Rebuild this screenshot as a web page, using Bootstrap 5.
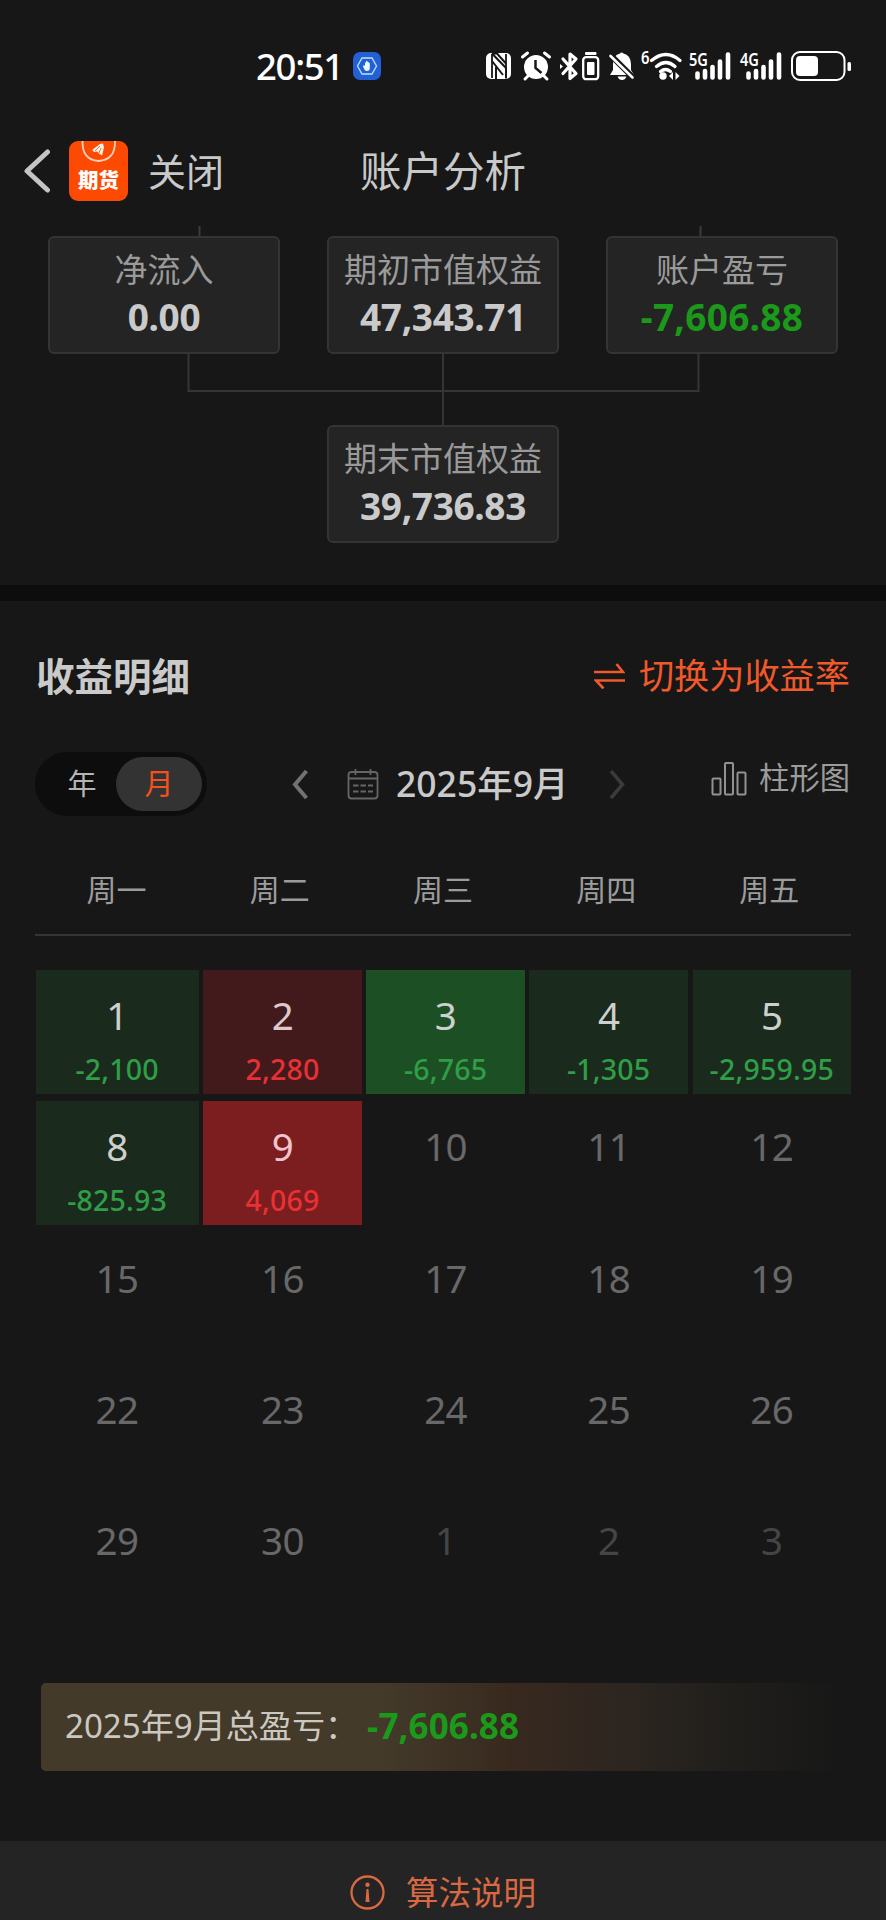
<!DOCTYPE html>
<html lang="zh-CN" data-bs-theme="dark">
<head>
<meta charset="utf-8">
<meta name="viewport" content="width=device-width, initial-scale=1">
<title>账户分析</title>
<link href="https://cdn.jsdelivr.net/npm/bootstrap@5.3.0/dist/css/bootstrap.min.css" rel="stylesheet">
<style>
  body { background: #171717; color: #c9c9c9; font-family: "Noto Sans", "Noto Sans CJK SC", sans-serif; line-height: 1; overflow-x: hidden; }
  svg { display: block; flex: none; }
  .screen { width: 886px; height: 1920px; overflow: hidden; }
  .status { height: 120px; padding: 12px 31px 0 256px; }
  .clock { font-size: 36.5px; font-weight: 500; color: #fff; letter-spacing: -1.3px; width: 97px; white-space: nowrap; }
  .topbar { height: 106px; padding: 0 24px; }
  .topbar .side { width: 336px; height: 102px; }
  .close-label { font-size: 38px; margin-left: 19px; }
  .page-title { font-size: 41.5px; width: 166px; white-space: nowrap; height: 104px; color: #c9c9c9; }
  .tree { height: 359px; padding: 0 48px; }
  .stub-row { height: 10px; }
  .node { width: 232px; height: 118px; background: #242424; border: 2px solid #343434; border-radius: 6px; padding-top: 15px; }
  .node .label { font-size: 33px; line-height: 34px; color: #9a9a9a; white-space: nowrap; }
  .node .value { font-size: 37px; font-weight: 700; line-height: 40px; margin-top: 10px; color: #cacaca; letter-spacing: -.35px; }
  .node .value.loss { color: #1b991b; letter-spacing: .3px; }
  .band { height: 16px; background: #0d0d0d; }
  .detail-head { height: 150px; padding: 0 36px; }
  .detail-title { font-size: 38.5px; font-weight: 700; color: #cacaca; }
  .accent { color: #f2592a; }
  .switch-rate { font-size: 35.2px; gap: 14px; }
  .controls { height: 66px; padding: 0 36px 0 35px; }
  .toggle { width: 172px; height: 64px; border-radius: 32px; background: #0d0d0d; padding: 5px 5px 5px 6px; font-size: 29px; }
  .toggle .choice { width: 75px; color: #b5b5b5; padding: 0 0 2px 7px; }
  .toggle .picked { width: 86px; border-radius: 27px; background: #333; color: #f5511e; padding-bottom: 2px; }
  .month { font-size: 35.5px; font-weight: 500; color: #cacaca; width: 171px; white-space: nowrap; margin-left: 17px; }
  .chart-link { font-size: 30.3px; color: #9c9c9c; gap: 12px; padding-bottom: 11px; }
  .week { height: 119px; margin: 0 35px; border-bottom: 2px solid #353535; font-size: 30px; color: #9c9c9c; padding-top: 28px; }
  .days { margin: 34px 35px 0 35.5px; }
  .day { height: 124px; margin-bottom: 7.25px; padding-top: 24px; font-size: 38.5px; color: #686868; }
  .days .col:not(:nth-child(5n+1)) .day { margin-left: 4.7px; }
  .day .num { line-height: 42px; letter-spacing: -.6px; }
  .day .amt { font-size: 28.5px; font-weight: 500; line-height: 32px; margin-top: 17px; letter-spacing: .2px; }
  .day.next { color: #454545; }
  .day.down, .day.down-big { color: #cdd0cd; }
  .down { background: #1a2b1e; } .down-big { background: #1d4f24; }
  .day.up { background: #431a1b; color: #dec8cb; } .day.up-big { background: #7c1d1f; color: #edc5ca; }
  .down .amt, .down-big .amt { color: #2f9e46; }
  .up .amt, .up-big .amt { color: #e83134; }
  .total { height: 88px; margin: 57px 35px 0 41px; padding: 0 0 4px 24px; border-radius: 5px; font-size: 33.1px; color: #cbc8c1;
    background: linear-gradient(90deg, #433a2a 0%, #433a2a 42%, #38291f 58%, #2c2520 73%, #1f1e1b 86%, #171717 99%); }
  .loss-total { font-size: 35px; font-weight: 700; color: #1b991b; margin-left: 9px; letter-spacing: .1px; }
  .foot { height: 79px; margin-top: 70px; background: #242424; padding-top: 24px; gap: 21px; font-size: 32.5px; color: #d96843; }
</style>
</head>
<body>
<main class="screen d-flex flex-column">
  <header class="status d-flex align-items-center flex-shrink-0">
    <span class="clock">20:51</span>
    <svg width="28" height="28" viewBox="0 0 28 28"><rect width="28" height="28" rx="7" fill="#255fd6"/><path d="M9 6h10l4.500 8-4.500 8H9l-4.500-8z" fill="none" stroke="#b6e6ff" stroke-width="1.300"/><path d="M10 14l1-1 1 1v-3.500h1V9h1.400v1h1.400v1h1v5q0 3-3 3-2.500 0-3.800-5z" fill="#e9f7ff"/></svg>
    <svg class="ms-auto" width="372" height="60" viewBox="482 36 372 60" fill="#fff">
      <rect x="485" y="53" width="25" height="26" rx="5"/>
      <path d="M491 54v24M505 54v24" stroke="#171717" stroke-width="1.800"/><path d="M491 53.500L505 68v10.500M491 61l11 14M495 79V67M491 53.500h5l9 10" fill="none" stroke="#171717" stroke-width="2"/>
      <circle cx="535" cy="67" r="12"/><path d="M521.500 57l5-4M548.500 57l-5-4M527 76l-3 3M543 76l3 3" stroke="#fff" stroke-width="3" stroke-linecap="round"/><path d="M534.500 60v8l6 5" fill="none" stroke="#171717" stroke-width="2.500"/>
      <path d="M562 59l13 14.500-6 5V54l6 5-13 14.500" fill="none" stroke="#fff" stroke-width="3.200" stroke-linejoin="round" stroke-linecap="round"/><path d="M559 64l3 2.500-3 2.500z"/>
      <rect x="584" y="52" width="11.500" height="3" rx="1"/><rect x="582.200" y="57.200" width="15" height="22" rx="3" fill="none" stroke="#fff" stroke-width="2.300"/><rect x="586" y="62" width="7.500" height="13" rx="1"/>
      <path d="M612 70v-6q0-9 7-10.500 1.500-2 3.500 0 7 1.500 7.500 10.500v6l3 5H609zM616.500 76.500h9q-1.500 3.500-4.500 3.500t-4.500-3.500"/><path d="M609 54.500l23 23" stroke="#171717" stroke-width="6"/><path d="M609.500 56l22 21.500" stroke="#fff" stroke-width="2.600" stroke-linecap="round"/>
      <text x="640" y="64" font-size="17" font-weight="600" textLength="8.500" lengthAdjust="spacingAndGlyphs">6</text>
      <path d="M650.500 60.500q14.500-12 28.500 0M655.500 66.500q9.500-8 18.500 0M659.500 71.500q5-4 10 0" fill="none" stroke="#fff" stroke-width="3.300" stroke-linecap="round"/><circle cx="662" cy="76" r="3.700"/><path d="M672 72v8l-4-4zM674.500 72v8l4-4z"/>
      <text x="688" y="66" font-size="18.500" font-weight="600" textLength="19" lengthAdjust="spacingAndGlyphs">5G</text>
      <path d="M696.500 73.500v4M704 71v6.500M711.500 67v10.500M719 61.500v16M727 54.500v23" stroke="#fff" stroke-width="4.600" stroke-linecap="round"/>
      <text x="739" y="66" font-size="18.500" font-weight="600" textLength="19" lengthAdjust="spacingAndGlyphs">4G</text>
      <path d="M747.500 73.500v4M755 71v6.500M762.500 67v10.500M770 61.500v16M778 54.500v23" stroke="#fff" stroke-width="4.600" stroke-linecap="round"/>
      <rect x="791" y="52" width="52.500" height="28" rx="8" fill="none" stroke="#fff" stroke-width="2"/><rect x="795" y="56" width="22" height="20" rx="4"/><rect x="846.500" y="62" width="3.500" height="9" rx="1.500"/>
    </svg>
  </header>

  <nav class="topbar d-flex flex-shrink-0">
    <div class="side d-flex align-items-center">
      <svg width="27" height="44" viewBox="0 0 27 44"><path d="M23.500 3L3 22l20.500 19" fill="none" stroke="#c4c4c4" stroke-width="5" stroke-linecap="round" stroke-linejoin="round"/></svg>
      <svg class="ms-3 ps-0" width="62" height="60" viewBox="-2 0 62 60"><rect width="59" height="60" rx="9" fill="#fd4a03"/><path d="M13.500 0Q13 19 29.500 20 46.500 19 46 0" fill="none" stroke="#ffd2bd" stroke-width="1.800"/><path d="M23 9l8-6 3-.5 1 4-2 8-3-2-2-2-3 .5z" fill="#fff0e8"/><path d="M26 10l5-5M30 12l2-5" stroke="#fd4a03" stroke-width=".8"/><text x="29.500" y="46.500" text-anchor="middle" font-size="20.500" font-weight="900" fill="#fff">期货</text></svg>
      <span class="close-label">关闭</span>
    </div>
    <h1 class="page-title d-flex align-items-center fw-normal m-0">账户分析</h1>
  </nav>

  <section class="tree flex-shrink-0">
    <svg class="stub-row" width="790" height="10"><path d="M151.500 0v10M652.500 0v10" stroke="#3b3b3b" stroke-width="2"/></svg>
    <div class="d-flex justify-content-between">
      <div class="node text-center"><div class="label">净流入</div><div class="value">0.00</div></div>
      <div class="node text-center"><div class="label">期初市值权益</div><div class="value">47,343.71</div></div>
      <div class="node text-center"><div class="label">账户盈亏</div><div class="value loss">-7,606.88</div></div>
    </div>
    <svg width="790" height="71"><path d="M140.500 0v37h510V0M395 0v71" fill="none" stroke="#353535" stroke-width="2"/></svg>
    <div class="d-flex justify-content-center">
      <div class="node text-center"><div class="label">期末市值权益</div><div class="value">39,736.83</div></div>
    </div>
  </section>
  <div class="band flex-shrink-0"></div>

  <section class="detail-head d-flex align-items-center justify-content-between flex-shrink-0">
    <h2 class="detail-title m-0">收益明细</h2>
    <div class="switch-rate accent d-flex align-items-center">
      <svg width="31" height="26" viewBox="0 0 31 26" fill="none" stroke="currentColor" stroke-width="2.600"><path d="M0 9h29L22.500 1M31 17.500H2l7.500 8"/></svg>
      <span>切换为收益率</span>
    </div>
  </section>

  <section class="controls d-flex align-items-center flex-shrink-0">
    <div class="toggle d-flex">
      <span class="choice d-flex align-items-center justify-content-center">年</span>
      <span class="picked d-flex align-items-center justify-content-center ms-auto">月</span>
    </div>
    <svg width="172" height="32" viewBox="207 768 172 32" fill="none"><path d="M306.500 771L295 784.500l11.500 13.500" stroke="#727272" stroke-width="4"/><g stroke="#666" stroke-width="1.800"><rect x="348.500" y="772" width="29" height="26.500" rx="3"/><path d="M348.500 778.500h29M355.500 769v6M370.500 769v6"/><path d="M353 785.500h20M353 791.500h20" stroke-dasharray="5.500 2"/></g></svg>
    <span class="month">2025年9月</span>
    <svg width="60" height="32" viewBox="567 768 60 32"><path d="M611 771l11.500 13.500L611 798" fill="none" stroke="#3b3b3b" stroke-width="3.500"/></svg>
    <div class="chart-link d-flex align-items-center ms-auto">
      <svg width="36" height="36" viewBox="0 0 36 36" fill="none" stroke="#929292" stroke-width="2"><rect x="1.500" y="17.500" width="8" height="16" rx="1"/><rect x="14" y="2" width="8" height="31.500" rx="1"/><rect x="26.500" y="11.500" width="8" height="22" rx="1"/></svg>
      <span>柱形图</span>
    </div>
  </section>

  <div class="week row row-cols-5 g-0 text-center align-items-center flex-shrink-0">
    <div class="col">周一</div><div class="col">周二</div><div class="col">周三</div><div class="col">周四</div><div class="col">周五</div>
  </div>

  <div class="days row row-cols-5 g-0 text-center flex-shrink-0">
    <div class="col"><div class="day down"><div class="num">1</div><div class="amt">-2,100</div></div></div>
    <div class="col"><div class="day up"><div class="num">2</div><div class="amt">2,280</div></div></div>
    <div class="col"><div class="day down-big"><div class="num">3</div><div class="amt">-6,765</div></div></div>
    <div class="col"><div class="day down"><div class="num">4</div><div class="amt">-1,305</div></div></div>
    <div class="col"><div class="day down"><div class="num">5</div><div class="amt">-2,959.95</div></div></div>
    <div class="col"><div class="day down"><div class="num">8</div><div class="amt">-825.93</div></div></div>
    <div class="col"><div class="day up-big"><div class="num">9</div><div class="amt">4,069</div></div></div>
    <div class="col"><div class="day"><div class="num">10</div></div></div>
    <div class="col"><div class="day"><div class="num">11</div></div></div>
    <div class="col"><div class="day"><div class="num">12</div></div></div>
    <div class="col"><div class="day"><div class="num">15</div></div></div>
    <div class="col"><div class="day"><div class="num">16</div></div></div>
    <div class="col"><div class="day"><div class="num">17</div></div></div>
    <div class="col"><div class="day"><div class="num">18</div></div></div>
    <div class="col"><div class="day"><div class="num">19</div></div></div>
    <div class="col"><div class="day"><div class="num">22</div></div></div>
    <div class="col"><div class="day"><div class="num">23</div></div></div>
    <div class="col"><div class="day"><div class="num">24</div></div></div>
    <div class="col"><div class="day"><div class="num">25</div></div></div>
    <div class="col"><div class="day"><div class="num">26</div></div></div>
    <div class="col"><div class="day"><div class="num">29</div></div></div>
    <div class="col"><div class="day"><div class="num">30</div></div></div>
    <div class="col"><div class="day next"><div class="num">1</div></div></div>
    <div class="col"><div class="day next"><div class="num">2</div></div></div>
    <div class="col"><div class="day next"><div class="num">3</div></div></div>
  </div>

  <div class="total d-flex align-items-center flex-shrink-0"><span>2025年9月总盈亏：</span><span class="loss-total">-7,606.88</span></div>

  <footer class="foot d-flex align-items-center justify-content-center flex-shrink-0">
    <svg width="35" height="35" viewBox="0 0 35 35"><circle cx="17.500" cy="17.500" r="16" fill="none" stroke="currentColor" stroke-width="2.300"/><circle cx="17.500" cy="9.800" r="2.200" fill="currentColor"/><path d="M16.500 14h2l1 13h-4z" fill="currentColor"/></svg>
    <span>算法说明</span>
  </footer>
</main>
<script src="https://cdn.jsdelivr.net/npm/bootstrap@5.3.0/dist/js/bootstrap.bundle.min.js"></script>
</body>
</html>
